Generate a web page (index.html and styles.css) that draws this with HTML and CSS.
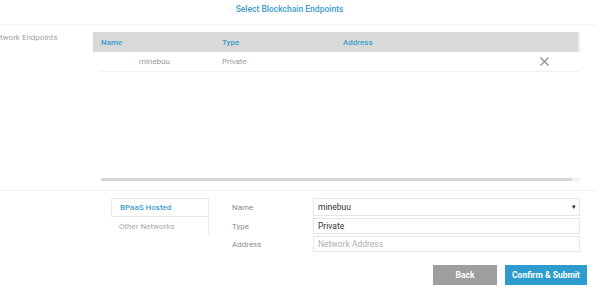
FILE: index.html
```html
<!DOCTYPE html>
<html lang="en">
<head>
    <meta charset="UTF-8">
    <title>Select Blockchain Endpoints</title>
    <link rel="stylesheet" href="styles.css">
</head>
<body>
    <div class="page">
        <div class="title-bar">
            <h1>Select Blockchain Endpoints</h1>
        </div>

        <div class="endpoints">
            <div class="side-label">Network Endpoints</div>
            <div class="table-wrap">
                <div class="table-head">
                    <span class="col-name">Name</span>
                    <span class="col-type">Type</span>
                    <span class="col-address">Address</span>
                </div>
                <div class="table-body">
                    <div class="table-row">
                        <span class="col-name cell-name">minebuu</span>
                        <span class="col-type">Private</span>
                        <span class="col-address"></span>
                        <span class="remove">
                            <svg width="9" height="9" viewBox="0 0 9 9"><path d="M0.5 0.5 L8.5 8.5 M8.5 0.5 L0.5 8.5" stroke="#8a8a8a" stroke-width="1.1" fill="none"/></svg>
                        </span>
                    </div>
                </div>
                <div class="scroll-track"><div class="scroll-thumb"></div></div>
            </div>
        </div>

        <div class="add-endpoint">
            <div class="tabs">
                <div class="tab active">BPaaS Hosted</div>
                <div class="tab">Other Networks</div>
            </div>
            <div class="fields">
                <div class="field">
                    <label>Name</label>
                    <div class="input select">minebuu<span class="caret">&#9662;</span></div>
                </div>
                <div class="field">
                    <label>Type</label>
                    <div class="input">Private</div>
                </div>
                <div class="field">
                    <label>Address</label>
                    <div class="input placeholder">Network Address</div>
                </div>
            </div>
        </div>

        <div class="actions">
            <button class="btn btn-back">Back</button>
            <button class="btn btn-submit">Confirm &amp; Submit</button>
        </div>
    </div>
</body>
</html>
```

FILE: styles.css
```css
body {
    margin: 0;
    padding: 0;
    background: #fff;
    font-family: Roboto, "Liberation Sans", Arial, sans-serif;
    font-size: 8px;
    color: #8c8c8c;
    overflow: hidden;
}

.page {
    width: 602px;
    height: 292px;
    overflow: hidden;
}

.title-bar {
    width: 595px;
    height: 25px;
    border-bottom: 1px solid #f3f3f3;
    box-sizing: border-box;
}

.title-bar h1 {
    margin: 0;
    width: 579px;
    padding-top: 4px;
    text-align: center;
    font-size: 8.5px;
    font-weight: 500;
    color: #3c9dcd;
}

.endpoints {
    display: flex;
    height: 165px;
    border-bottom: 1px solid #f1f1f1;
    width: 597px;
}

.side-label {
    width: 103px;
    margin-left: -10px;
    padding-top: 8px;
    color: #a3a3a3;
    white-space: nowrap;
}

.table-wrap {
    width: 487px;
    padding-top: 7px;
}

.table-head {
    display: flex;
    height: 20px;
    align-items: center;
    background: #d9d9d9;
    border-right: 2px solid #ececec;
    color: #3c9dcd;
    font-weight: 500;
    padding-left: 8px;
}

.col-name {
    width: 121px;
}

.col-type {
    width: 121px;
}

.col-address {
    flex: 1;
}

.table-body {
    height: 126px;
    margin-left: 8px;
}

.table-row {
    display: flex;
    align-items: center;
    height: 19px;
    border-bottom: 1px solid #f0f0f0;
    color: #9a9a9a;
}

.cell-name {
    padding-left: 38px;
    width: 83px;
}

.remove {
    width: 40px;
    display: flex;
    align-items: center;
}

.scroll-track {
    margin-left: 8px;
    height: 3px;
    background: #f0f0f0;
}

.scroll-thumb {
    width: 471px;
    height: 3px;
    background: #d6d6d6;
}

.add-endpoint {
    display: flex;
    padding-top: 7px;
    height: 62px;
}

.tabs {
    margin-left: 111px;
    width: 97px;
    height: 38px;
    border-right: 1px solid #ececec;
}

.tab {
    height: 18px;
    line-height: 18px;
    padding-left: 8px;
    color: #ababab;
}

.tab.active {
    height: 17px;
    border: 1px solid #e8e8e8;
    border-right: none;
    border-radius: 2px 0 0 2px;
    color: #3c9dcd;
    font-weight: 500;
    padding-left: 8px;
    margin-bottom: 1px;
}

.fields {
    margin-left: 23px;
}

.field {
    display: flex;
    align-items: center;
    margin-bottom: 2px;
}

.field label {
    width: 81px;
    color: #8c8c8c;
}

.input {
    box-sizing: border-box;
    width: 267px;
    height: 16px;
    line-height: 14px;
    border: 1px solid #e6e6e6;
    padding-left: 4px;
    color: #333;
    font-size: 8.5px;
}

.input.select {
    height: 18px;
    line-height: 16px;
    display: flex;
    justify-content: space-between;
    padding-right: 3px;
}

.caret {
    font-size: 7px;
    color: #222;
}

.input.placeholder {
    color: #b0b0b0;
}

.actions {
    display: flex;
    justify-content: flex-end;
    gap: 8px;
    width: 587px;
    padding-top: 5px;
}

.btn {
    height: 20px;
    border: none;
    color: #fff;
    font-family: Roboto, "Liberation Sans", Arial, sans-serif;
    font-size: 8.5px;
    font-weight: 700;
    cursor: pointer;
    padding: 0;
}

.btn-back {
    width: 64px;
    background: #9e9e9e;
}

.btn-submit {
    width: 82px;
    background: #2d9bcb;
}
```
